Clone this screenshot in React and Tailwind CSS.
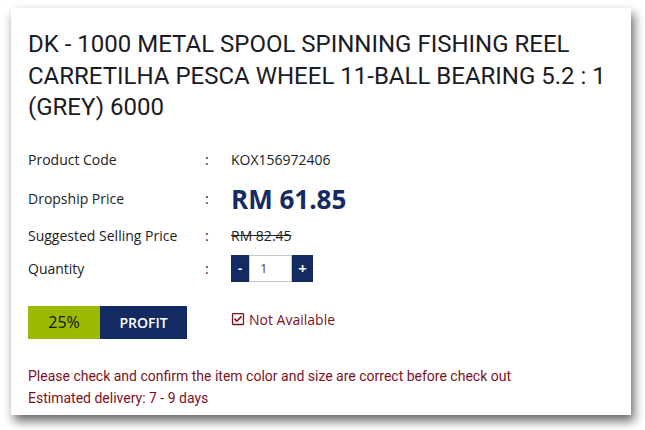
import React from 'react'
import { FaRegCheckSquare } from 'react-icons/fa'

const open = { fontFamily: '"Open Sans", "Liberation Sans", sans-serif' }
const roboto = { fontFamily: 'Roboto, "Liberation Sans", sans-serif' }

function Row({ label, className, children }) {
  return (
    <div className={`flex items-center text-[14px] text-[#222] ${className}`}>
      <div className="w-[177px]">{label}</div>
      <div className="w-[26px]">:</div>
      <div className="flex items-center">{children}</div>
    </div>
  )
}

export default function App() {
  return (
    <div className="w-[645px] h-[430px] bg-white overflow-hidden pt-[8px] pl-[11px]">
      <div className="w-[620px] h-[407px] bg-white shadow-[3px_6px_10px_rgba(0,0,0,0.6)] px-[17px] pt-[21px]">
        {/* Title */}
        <h1 className="text-[24px] leading-[31.5px] text-[#1b1b24] uppercase" style={roboto}>
          DK - 1000 METAL SPOOL SPINNING FISHING REEL CARRETILHA PESCA WHEEL 11-BALL BEARING 5.2 : 1 (GREY) 6000
        </h1>

        <div style={open} className="mt-[25px]">
          <Row label="Product Code" className="h-[22px]">
            KOX156972406
          </Row>
          <Row label="Dropship Price" className="h-[40px] mt-[8px]">
            <span className="text-[26px] font-bold text-[#142a63] leading-none">RM 61.85</span>
          </Row>
          <Row label="Suggested Selling Price" className="h-[20px] mt-[7px]">
            <span className="line-through">RM 82.45</span>
          </Row>
          <Row label="Quantity" className="h-[28px] mt-[9px]">
            <div className="flex h-[27px]">
              <button className="w-[18px] bg-[#132a63] text-white font-bold text-[13px]">-</button>
              <div className="w-[43px] border border-[#c8c8c8] flex items-center pl-[10px] text-[13px] text-[#444]">1</div>
              <button className="w-[21px] bg-[#132a63] text-white font-bold text-[15px]">+</button>
            </div>
          </Row>
        </div>

        <div className="flex mt-[23px]" style={open}>
          <div className="flex h-[33px]">
            <div className="w-[72px] bg-[#9cba00] flex items-center justify-center text-[16px] text-[#111]">25%</div>
            <div className="w-[87px] bg-[#132a63] flex items-center justify-center text-[14px] font-semibold text-white">PROFIT</div>
          </div>
          <div className="ml-[44px] flex items-center gap-[4px] h-[27px] text-[14px] text-[#7a1224]">
            <FaRegCheckSquare className="w-[14px] h-[14px]" />
            <span>Not Available</span>
          </div>
        </div>

        <div className="mt-[26px] text-[14px] leading-[22px] text-[#7a1224]" style={roboto}>
          <p>Please check and confirm the item color and size are correct before check out</p>
          <p>Estimated delivery: 7 - 9 days</p>
        </div>
      </div>
    </div>
  )
}
